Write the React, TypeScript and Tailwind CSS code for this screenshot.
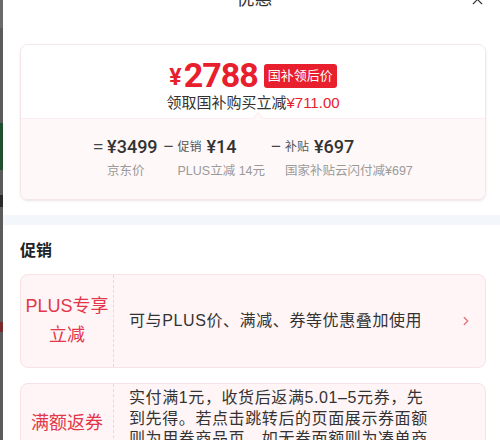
import { X, ChevronRight } from 'lucide-react';

const font = { fontFamily: '"Liberation Sans", "Noto Sans CJK SC", sans-serif' };
const digits = { fontFamily: 'Roboto, "Noto Sans CJK SC", sans-serif' };

function Breakdown() {
  const cols = [
    { op: '=', tag: '', value: '¥3499', label: '京东价' },
    { op: '−', tag: '促销', value: '¥14', label: 'PLUS立减 14元' },
    { op: '−', tag: '补贴', value: '¥697', label: '国家补贴云闪付减¥697' },
  ];
  return (
    <div className="flex justify-center gap-[6px]">
      {cols.map((c, i) => (
        <div key={i} className="flex items-start gap-[4px]">
          <span className="text-[17px] leading-[24px] text-[#444]">{c.op}</span>
          <div className="flex flex-col">
            <div className="flex items-center gap-[5px] h-[24px]">
              {c.tag && <span className="text-[12px] text-[#555]">{c.tag}</span>}
              <span className="text-[18px] font-medium text-[#333] leading-[24px]" style={digits}>{c.value}</span>
            </div>
            <span className="mt-[3px] text-[12.5px] leading-[18px] text-[#9a9a9a]">{c.label}</span>
          </div>
        </div>
      ))}
    </div>
  );
}

export default function App() {
  return (
    <div className="w-[500px] h-[440px] overflow-hidden flex bg-white" style={font}>
      {/* page behind the sheet */}
      <div className="w-[3px] shrink-0 flex flex-col bg-[#5b5b5b]">
        <div className="h-[28px] shrink-0 bg-[#6a6a6a]" />
        <div className="h-[95px] shrink-0" />
        <div className="h-[47px] shrink-0 bg-[#1f4f2f]" />
        <div className="h-[25px] shrink-0" />
        <div className="h-[12px] shrink-0 bg-[#2a2a2a]" />
        <div className="h-[115px] shrink-0" />
        <div className="h-[10px] shrink-0 bg-[#7a2a2a]" />
        <div className="flex-1" />
      </div>

      <div className="flex-1 flex flex-col">
        <div className="shrink-0 pl-[17px] pr-[11px]">
          {/* header */}
          <div className="mt-[-13px] h-[24px] grid grid-cols-[20px_1fr_20px] items-center">
            <span />
            <span className="text-center text-[18px] leading-[24px] text-[#333]">优惠</span>
            <X size={17} strokeWidth={1.6} className="text-[#333]" />
          </div>

          {/* price card */}
          <div className="mt-[33px] w-[466px] rounded-lg border border-[#f4e6e8] shadow-[0_1px_2px_rgba(220,200,205,0.5)] overflow-hidden">
            <div className="bg-white pt-[15px] pb-[5px] flex flex-col items-center">
              <div className="flex items-center h-[30px]">
                <span className="text-[23px] font-bold text-[#e8202e] leading-none mt-[5px] mr-[2px]" style={digits}>¥</span>
                <span className="text-[34px] font-bold text-[#e8202e] leading-none tracking-[-1px]" style={digits}>2788</span>
                <span className="ml-[6px] mt-[2px] h-[24px] px-[4px] rounded-[3px] bg-[#e8202e] text-white text-[13px] leading-[24px]">国补领后价</span>
              </div>
              <div className="mt-[3px] text-[15px] leading-[20px] text-[#333]">
                领取国补购买立减<span className="text-[#e8202e]">¥711.00</span>
              </div>
            </div>
            <div className="relative bg-[#fff8f8] border-t border-[#fbeef0] pt-[16px] pb-[19px]">
              <div className="absolute left-[233px] top-[-5px] w-[8px] h-[8px] rotate-45 bg-[#fff8f8] border-l border-t border-[#fbeef0]" />
              <Breakdown />
            </div>
          </div>
        </div>

        {/* divider band */}
        <div className="shrink-0 mt-[15px] h-[10px] bg-[#f3f6fa]" />

        <div className="shrink-0 pl-[17px] pr-[11px]">
          <div className="mt-[14px] text-[16px] leading-[24px] font-bold text-[#222]">促销</div>

          <div className="mt-[11px] w-[466px] h-[94px] flex rounded-lg border border-[#f6e3e6] bg-[#fff5f6]">
            <div className="w-[93px] shrink-0 flex flex-col items-center justify-center border-r border-dashed border-[#f0d3d7] text-[18px] leading-[29px] text-[#e3364a]">
              <span>PLUS专享</span>
              <span>立减</span>
            </div>
            <div className="flex-1 flex items-center justify-between pl-[15px] pr-[12px]">
              <span className="text-[16px] tracking-[0.6px] text-[#333]">可与PLUS价、满减、券等优惠叠加使用</span>
              <ChevronRight size={14} strokeWidth={2.2} className="text-[#e2727e]" />
            </div>
          </div>

          <div className="mt-[15px] w-[466px] flex rounded-lg border border-[#f6e3e6] bg-[#fff5f6]">
            <div className="w-[93px] shrink-0 flex justify-center pt-[27px] border-r border-dashed border-[#f0d3d7] text-[18px] leading-[24px] text-[#e3364a]">
              满额返券
            </div>
            <div className="pl-[15px] pt-[4px] pb-[4px]">
              <p className="w-[301px] text-[16px] leading-[20.5px] tracking-[0.6px] text-[#333]">
                实付满1元，收货后返满5.01–5元券，先到先得。若点击跳转后的页面展示券面额则为用券商品页，如无券面额则为凑单商品页。
              </p>
            </div>
          </div>
        </div>
      </div>
    </div>
  );
}
